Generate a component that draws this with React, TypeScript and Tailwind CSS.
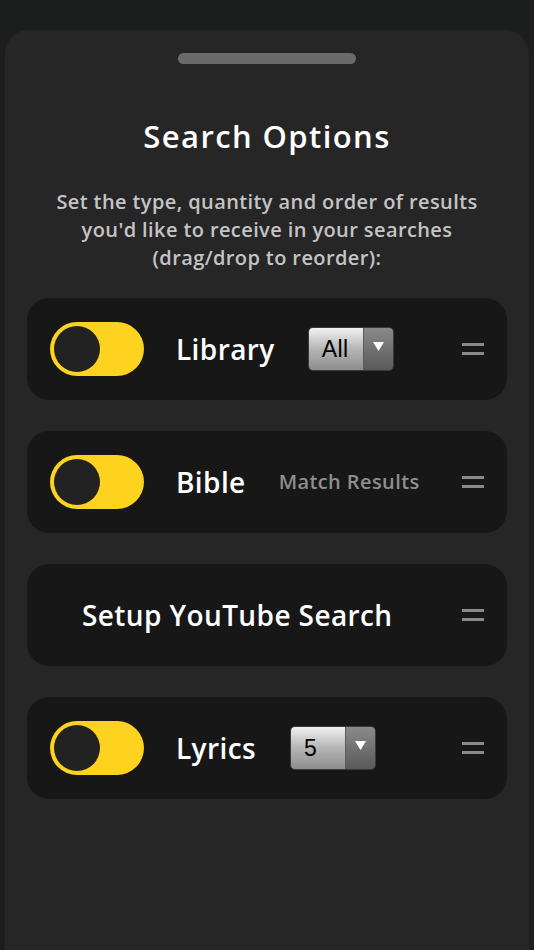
import React from 'react';

const font = { fontFamily: '"Open Sans", "Noto Sans", sans-serif' };

const Toggle = () => (
  <div className="w-[94px] h-[54px] rounded-full bg-[#fdd31f] flex items-center pl-[4px] shrink-0">
    <div className="w-[46px] h-[46px] rounded-full bg-[#222222]" />
  </div>
);

const Handle = () => (
  <div className="flex flex-col gap-[6px] w-[22px] shrink-0">
    <div className="h-[3px] bg-[#8a8a8a]" />
    <div className="h-[3px] bg-[#8a8a8a]" />
  </div>
);

const Select = ({ value }: { value: string }) => (
  <div className="flex h-[44px] w-[86px] rounded-[5px] border border-[#3a3a3a] overflow-hidden shrink-0">
    <div className="flex-1 flex items-center pl-[13px] bg-gradient-to-b from-[#f2f2f2] via-[#b5b5b5] to-[#8e8e8e] border-r border-[#5c5c5c]">
      <span className="text-[23px] text-black leading-none" style={{ fontFamily: '"Liberation Sans", Arial, sans-serif' }}>{value}</span>
    </div>
    <div className="w-[29px] flex items-start justify-center pt-[14px] bg-gradient-to-b from-[#8a8a8a] to-[#5a5a5a]">
      <svg width="11" height="9" viewBox="0 0 11 9">
        <path d="M0 0 L11 0 L5.5 9 Z" fill="#ffffff" />
      </svg>
    </div>
  </div>
);

const Row = ({ children }: { children: React.ReactNode }) => (
  <div className="h-[102px] rounded-[22px] bg-[#171717] flex items-center pl-[23px] pr-[23px]">
    {children}
  </div>
);

export default function App() {
  return (
    <div className="min-h-[950px] bg-[#1c1d1d] pt-[30px] px-[5px] flex" style={font}>
      <div className="flex-1 bg-[#262626] rounded-t-[24px] flex flex-col items-center px-[22px]">
        <div className="mt-[23px] w-[178px] h-[11px] rounded-full bg-[#6a6a6a]" />
        <h1 className="mt-[57px] text-[31px] font-semibold text-white leading-none tracking-[1.4px]">Search Options</h1>
        <p className="mt-[36px] text-[20px] leading-[28px] text-[#c4c4c4] text-center font-semibold tracking-[0.4px]">
          Set the type, quantity and order of results
          <br />
          you'd like to receive in your searches
          <br />
          (drag/drop to reorder):
        </p>
        <div className="mt-[26px] w-full flex flex-col gap-[31px] tracking-[0.4px]">
          <Row>
            <Toggle />
            <span className="ml-[32px] text-[28px] text-white font-semibold">Library</span>
            <div className="ml-[33px]"><Select value="All" /></div>
            <div className="ml-auto"><Handle /></div>
          </Row>
          <Row>
            <Toggle />
            <span className="ml-[32px] text-[28px] text-white font-semibold">Bible</span>
            <span className="ml-[33px] text-[20px] text-[#8e8e8e] font-semibold">Match Results</span>
            <div className="ml-auto"><Handle /></div>
          </Row>
          <Row>
            <span className="ml-[32px] text-[28px] text-white font-semibold">Setup YouTube Search</span>
            <div className="ml-auto"><Handle /></div>
          </Row>
          <Row>
            <Toggle />
            <span className="ml-[32px] text-[28px] text-white font-semibold">Lyrics</span>
            <div className="ml-[34px]"><Select value="5" /></div>
            <div className="ml-auto"><Handle /></div>
          </Row>
        </div>
      </div>
    </div>
  );
}
